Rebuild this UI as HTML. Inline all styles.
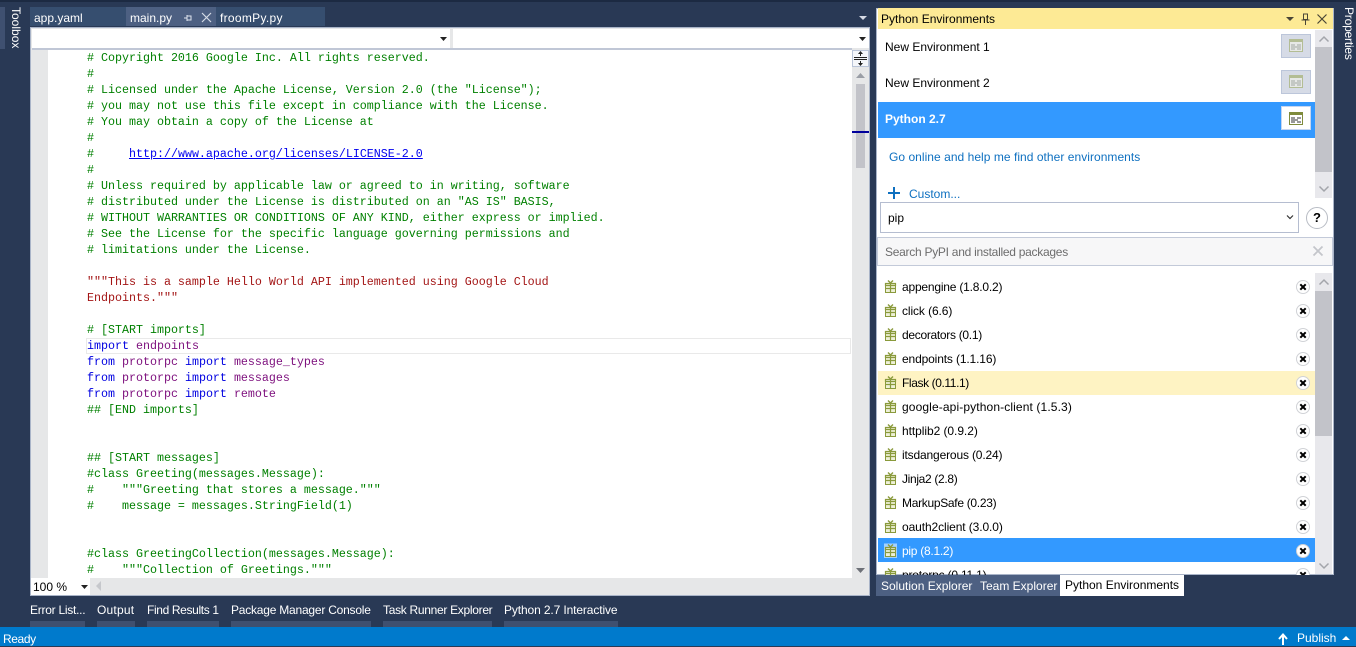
<!DOCTYPE html>
<html><head><meta charset="utf-8"><style>
html,body{margin:0;padding:0}
body{width:1356px;height:646px;overflow:hidden;background:#293955;position:relative;font-family:"Liberation Sans",sans-serif;font-size:12px;color:#000}
.a{position:absolute;white-space:nowrap}
.t{position:absolute;white-space:nowrap;line-height:16px}
pre{margin:0;position:absolute;left:0;top:0;font:11.67px/16px "Liberation Mono",monospace;color:#008000}
.k{color:#0000e0}.p{color:#7d0f7d}.s{color:#a31515}
.u{color:#0000ee;text-decoration:underline}
svg{position:absolute;overflow:visible}
</style></head><body>
<div class="a" style="left:0;top:0;width:1356px;height:2px;background:#1c2a42"></div>
<!-- side tabs -->
<div class="a" style="left:0;top:7px;width:5px;height:42px;background:#3f5070"></div>
<div class="a" style="left:8px;top:7px;writing-mode:vertical-rl;color:#fff;line-height:15px">Toolbox</div>
<div class="a" style="left:1341px;top:7px;writing-mode:vertical-rl;color:#fff;line-height:15px;letter-spacing:-.2px">Properties</div>
<!-- doc tabs -->
<div class="a" style="left:30px;top:7px;width:96px;height:19px;background:#364e6f"></div>
<div class="a" style="left:126px;top:7px;width:90px;height:19px;background:#4d6082"></div>
<div class="a" style="left:216px;top:7px;width:109px;height:19px;background:#364e6f"></div>
<div class="t" style="left:34px;top:10px;color:#fff">app.yaml</div>
<div class="t" style="left:130px;top:10px;color:#fff">main.py</div>
<div class="t" style="left:220px;top:10px;color:#fff;letter-spacing:.3px">froomPy.py</div>
<svg style="left:183px;top:13px" width="10" height="10"><path d="M1 5H4M4 2V8M4 3H8V7H4" fill="none" stroke="#dfe5ef"/></svg>
<svg style="left:201px;top:12px" width="11" height="11"><path d="M1 1L10 10M10 1L1 10" stroke="#d5dbe6" stroke-width="1.2"/></svg>
<svg style="left:859px;top:16px" width="8" height="4"><path d="M0 0H8L4 4Z" fill="#d5dae4"/></svg>
<!-- editor -->
<div class="a" style="left:30px;top:27px;width:840px;height:569px;background:#e6e7e8;box-shadow:inset 0 0 0 1px #a9b4c8"></div>
<div class="a" style="left:32px;top:29px;width:418px;height:19px;background:#fff"></div>
<div class="a" style="left:453px;top:29px;width:416px;height:19px;background:#fff"></div>
<svg style="left:440px;top:37px" width="7" height="4"><path d="M0 0H7L3.5 4Z" fill="#222"/></svg>
<svg style="left:859px;top:37px" width="7" height="4"><path d="M0 0H7L3.5 4Z" fill="#222"/></svg>
<div class="a" style="left:32px;top:48px;width:820px;height:2px;background:#c0c7d6"></div>
<div class="a" style="left:48px;top:50px;width:804px;height:528px;background:#fff;overflow:hidden">
<div class="a" style="left:38px;top:288px;width:765px;height:16px;box-sizing:border-box;border:1px solid #e9e9e9"></div>
<div style="position:absolute;left:39px;top:0;width:760px;height:528px"><pre># Copyright 2016 Google Inc. All rights reserved.
#
# Licensed under the Apache License, Version 2.0 (the "License");
# you may not use this file except in compliance with the License.
# You may obtain a copy of the License at
#
#     <span class="u">http://www.apache.org/licenses/LICENSE-2.0</span>
#
# Unless required by applicable law or agreed to in writing, software
# distributed under the License is distributed on an "AS IS" BASIS,
# WITHOUT WARRANTIES OR CONDITIONS OF ANY KIND, either express or implied.
# See the License for the specific language governing permissions and
# limitations under the License.

<span class="s">"""This is a sample Hello World API implemented using Google Cloud
Endpoints."""</span>

# [START imports]
<span class="k">import</span> <span class="p">endpoints</span>
<span class="k">from</span> <span class="p">protorpc</span> <span class="k">import</span> <span class="p">message_types</span>
<span class="k">from</span> <span class="p">protorpc</span> <span class="k">import</span> <span class="p">messages</span>
<span class="k">from</span> <span class="p">protorpc</span> <span class="k">import</span> <span class="p">remote</span>
## [END imports]


## [START messages]
#class Greeting(messages.Message):
#    """Greeting that stores a message."""
#    message = messages.StringField(1)


#class GreetingCollection(messages.Message):
#    """Collection of Greetings."""</pre></div>
</div>
<!-- editor scrollbar -->
<div class="a" style="left:852px;top:50px;width:17px;height:17px;background:#f4f6fa;box-sizing:border-box;border:1px solid #b9c4d8"></div>
<svg style="left:854px;top:51px" width="13" height="15"><path d="M0 6.5H13M0 8.5H13M6.5 1V5M6.5 10V14" stroke="#222" fill="none"/><path d="M4 3L6.5 0L9 3ZM4 12L6.5 15L9 12Z" fill="#222"/></svg>
<svg style="left:856px;top:73px" width="10" height="5"><path d="M0 5H9L4.5 0Z" fill="#9a9ea6"/></svg>
<div class="a" style="left:856px;top:84px;width:9px;height:84px;background:#c2c3c9"></div>
<div class="a" style="left:852px;top:131px;width:17px;height:2px;background:#00009c"></div>
<svg style="left:856px;top:568px" width="10" height="5"><path d="M0 0H9L4.5 5Z" fill="#6e7178"/></svg>
<!-- zoom bar -->
<div class="a" style="left:31px;top:578px;width:59px;height:17px;background:#fff"></div>
<div class="t" style="left:33px;top:579px">100 %</div>
<svg style="left:81px;top:585px" width="7" height="4"><path d="M0 0H7L3.5 4Z" fill="#222"/></svg>
<svg style="left:96px;top:581px" width="6" height="11"><path d="M5 0V10L0 5Z" fill="#c6c8cc"/></svg>
<!-- bottom tool tabs -->
<div class="a" style="left:30px;top:621px;width:55px;height:6px;background:#3f5070"></div>
<div class="a" style="left:97px;top:621px;width:38px;height:6px;background:#3f5070"></div>
<div class="a" style="left:147px;top:621px;width:72px;height:6px;background:#3f5070"></div>
<div class="a" style="left:231px;top:621px;width:140px;height:6px;background:#3f5070"></div>
<div class="a" style="left:383px;top:621px;width:109px;height:6px;background:#3f5070"></div>
<div class="a" style="left:504px;top:621px;width:114px;height:6px;background:#3f5070"></div>
<div class="t" style="left:30px;top:602px;color:#fff;letter-spacing:-.26px">Error List...</div>
<div class="t" style="left:97px;top:602px;color:#fff;letter-spacing:.2px">Output</div>
<div class="t" style="left:147px;top:602px;color:#fff;letter-spacing:-.36px">Find Results 1</div>
<div class="t" style="left:231px;top:602px;color:#fff;letter-spacing:-.22px">Package Manager Console</div>
<div class="t" style="left:383px;top:602px;color:#fff;letter-spacing:-.3px">Task Runner Explorer</div>
<div class="t" style="left:504px;top:602px;color:#fff;letter-spacing:-.12px">Python 2.7 Interactive</div>
<!-- status -->
<div class="a" style="left:0;top:627px;width:1356px;height:19px;background:#007acc"></div>
<div class="t" style="left:3px;top:631px;color:#fff;letter-spacing:-.4px">Ready</div>
<svg style="left:1278px;top:633px" width="10" height="12"><path d="M5 12V3M1 6L5 1.5L9 6" stroke="#fff" stroke-width="2" fill="none"/></svg>
<div class="t" style="left:1297px;top:630px;color:#fff">Publish</div>
<svg style="left:1342px;top:636px" width="8" height="4"><path d="M0 4H8L4 0Z" fill="#fff"/></svg>
<!-- right panel -->
<div class="a" style="left:876px;top:8px;width:458px;height:567px;background:#fff;box-shadow:inset 0 0 0 1px #a9b4c8"></div>
<div class="a" style="left:878px;top:8px;width:455px;height:21px;background:#fdea95"></div>
<div class="t" style="left:881px;top:11px">Python Environments</div>
<svg style="left:1286px;top:17px" width="8" height="4"><path d="M0 0H8L4 4Z" fill="#4a4636"/></svg>
<svg style="left:1301px;top:13px" width="9" height="12"><path d="M2.5 1H6.5V6.5H2.5ZM0.5 7H8.5M4.5 7V12" fill="none" stroke="#4a4636" stroke-width="1"/></svg>
<svg style="left:1317px;top:14px" width="10" height="10"><path d="M0.5 0.5L9.5 9.5M9.5 0.5L0.5 9.5" stroke="#4a4636" stroke-width="1.2"/></svg>
<!-- env list -->
<div class="t" style="left:885px;top:39px">New Environment 1</div>
<div class="t" style="left:885px;top:75px">New Environment 2</div>
<div class="a" style="left:878px;top:102px;width:437px;height:36px;background:#3399ff"></div>
<div class="t" style="left:885px;top:111px;color:#fff;font-weight:bold">Python 2.7</div>
<div class="a" style="left:1281px;top:34px;width:30px;height:24px;box-sizing:border-box;background:#d6dbe6;border:1px solid #bcc6da"></div>
<div class="a" style="left:1281px;top:70px;width:30px;height:24px;box-sizing:border-box;background:#d6dbe6;border:1px solid #bcc6da"></div>
<div class="a" style="left:1281px;top:106px;width:30px;height:24px;box-sizing:border-box;background:#fff;border:1px solid #c5d5f0"></div>
<svg style="left:1289px;top:39px" width="14" height="13"><rect x=".5" y=".5" width="13" height="12" fill="#e6e8e6" stroke="#b3bd94"/><rect width="14" height="3" fill="#b3bd94"/><path d="M2 6H6M8 6H12M2 8H12M2 10H6M8 10H12" stroke="#a3a9a3"/></svg>
<svg style="left:1289px;top:75px" width="14" height="13"><rect x=".5" y=".5" width="13" height="12" fill="#e6e8e6" stroke="#b3bd94"/><rect width="14" height="3" fill="#b3bd94"/><path d="M2 6H6M8 6H12M2 8H12M2 10H6M8 10H12" stroke="#a3a9a3"/></svg>
<svg style="left:1289px;top:112px" width="14" height="13"><rect x=".5" y=".5" width="13" height="12" fill="#fff" stroke="#7f8b3c"/><rect width="14" height="3" fill="#7f8b3c"/><path d="M2 6H6M8 6H12M2 8H9M2 10H6M8 10H12" stroke="#333"/></svg>
<div class="t" style="left:889px;top:149px;color:#0e70c0;letter-spacing:.04px">Go online and help me find other environments</div>
<svg style="left:888px;top:187px" width="12" height="12"><path d="M6 0V12M0 6H12" stroke="#0e70c0" stroke-width="2"/></svg>
<div class="t" style="left:909px;top:186px;color:#0e70c0">Custom...</div>
<div class="a" style="left:1315px;top:30px;width:17px;height:168px;background:#e8e8ec"></div>
<div class="a" style="left:1315px;top:47px;width:17px;height:125px;background:#c2c3c9"></div>
<svg style="left:1319px;top:36px" width="10" height="6"><path d="M0.5 5.5L5 1L9.5 5.5" fill="none" stroke="#a3a5ab" stroke-width="1.5"/></svg>
<svg style="left:1319px;top:186px" width="10" height="6"><path d="M0.5 0.5L5 5L9.5 0.5" fill="none" stroke="#a3a5ab" stroke-width="1.5"/></svg>
<!-- combo -->
<div class="a" style="left:880px;top:202px;width:419px;height:31px;box-sizing:border-box;background:#fff;border:1px solid #b5bdd0"></div>
<div class="t" style="left:888px;top:210px">pip</div>
<svg style="left:1286px;top:215px" width="8" height="5"><path d="M1 0.5L4 3.5L7 0.5" fill="none" stroke="#333" stroke-width="1.2"/></svg>
<div class="a" style="left:1306px;top:207px;width:22px;height:22px;box-sizing:border-box;border:1px solid #b8bcc4;border-radius:50%;background:#fff;text-align:center;font-weight:bold;line-height:20px;font-size:13px">?</div>
<!-- search -->
<div class="a" style="left:877px;top:237px;width:456px;height:29px;box-sizing:border-box;background:#f7f7f8;border:1px solid #c3cad9"></div>
<div class="t" style="left:885px;top:244px;color:#6d6d6d;letter-spacing:-.27px">Search PyPI and installed packages</div>
<svg style="left:1313px;top:246px" width="10" height="10"><path d="M0.5 0.5L9.5 9.5M9.5 0.5L0.5 9.5" stroke="#c4c6cb" stroke-width="1.8"/></svg>
<!-- packages -->
<div class="a" style="left:878px;top:371px;width:437px;height:24px;background:#fef3c3"></div>
<div class="a" style="left:878px;top:538px;width:437px;height:24px;background:#3399ff"></div>
<div class="a" style="left:878px;top:267px;width:437px;height:308px;overflow:hidden">
<div class="t" style="left:24px;top:12px;letter-spacing:-.2px">appengine (1.8.0.2)</div>
<div class="t" style="left:24px;top:36px;letter-spacing:-.1px">click (6.6)</div>
<div class="t" style="left:24px;top:60px;letter-spacing:-.3px">decorators (0.1)</div>
<div class="t" style="left:24px;top:84px;letter-spacing:-.14px">endpoints (1.1.16)</div>
<div class="t" style="left:24px;top:108px;letter-spacing:-.4px">Flask (0.11.1)</div>
<div class="t" style="left:24px;top:132px;letter-spacing:.12px">google-api-python-client (1.5.3)</div>
<div class="t" style="left:24px;top:156px;letter-spacing:-.06px">httplib2 (0.9.2)</div>
<div class="t" style="left:24px;top:180px;letter-spacing:-.16px">itsdangerous (0.24)</div>
<div class="t" style="left:24px;top:204px;letter-spacing:-.33px">Jinja2 (2.8)</div>
<div class="t" style="left:24px;top:228px;letter-spacing:-.3px">MarkupSafe (0.23)</div>
<div class="t" style="left:24px;top:252px;letter-spacing:-.1px">oauth2client (3.0.0)</div>
<div class="t" style="left:24px;top:276px;color:#fff;letter-spacing:-.27px">pip (8.1.2)</div>
<div class="t" style="left:24px;top:300px;letter-spacing:-.2px">protorpc (0.11.1)</div>
<svg style="left:0;top:0" width="437" height="308">
<defs>
<g id="g"><path d="M3 0.5L5.5 3L8 0.5" fill="none" stroke="#8a9a3c" stroke-width="1.4"/><rect x="0.5" y="3.5" width="10" height="9" fill="#eef0d8" stroke="#8a9a3c"/><path d="M0.5 3.5H10.5V5.5H0.5ZM5.5 3.5V12.5M0.5 8.5H10.5" fill="none" stroke="#8a9a3c" stroke-width="1.2"/></g>
<g id="h"><rect x="-1" y="-0.5" width="13" height="14.5" fill="#fff" fill-opacity=".55"/><use href="#g"/></g>
<g id="x"><circle cx="7" cy="7" r="6.5" fill="#fff" stroke="#d0d2d6"/><path d="M4.3 4.3L9.7 9.7M9.7 4.3L4.3 9.7" stroke="#000" stroke-width="2"/></g>
</defs>
<use href="#g" x="7" y="13"/><use href="#g" x="7" y="37"/><use href="#g" x="7" y="61"/><use href="#g" x="7" y="85"/><use href="#g" x="7" y="109"/><use href="#g" x="7" y="133"/><use href="#g" x="7" y="157"/><use href="#g" x="7" y="181"/><use href="#g" x="7" y="205"/><use href="#g" x="7" y="229"/><use href="#g" x="7" y="253"/><use href="#h" x="7" y="277"/><use href="#g" x="7" y="301"/>
<use href="#x" x="418" y="13"/><use href="#x" x="418" y="37"/><use href="#x" x="418" y="61"/><use href="#x" x="418" y="85"/><use href="#x" x="418" y="109"/><use href="#x" x="418" y="133"/><use href="#x" x="418" y="157"/><use href="#x" x="418" y="181"/><use href="#x" x="418" y="205"/><use href="#x" x="418" y="229"/><use href="#x" x="418" y="253"/><use href="#x" x="418" y="277"/><use href="#x" x="418" y="301"/>
</svg>
</div>
<div class="a" style="left:1315px;top:273px;width:17px;height:301px;background:#e8e8ec"></div>
<div class="a" style="left:1315px;top:291px;width:17px;height:145px;background:#c2c3c9"></div>
<svg style="left:1319px;top:279px" width="10" height="6"><path d="M0.5 5.5L5 1L9.5 5.5" fill="none" stroke="#a3a5ab" stroke-width="1.5"/></svg>
<svg style="left:1319px;top:563px" width="10" height="6"><path d="M0.5 0.5L5 5L9.5 0.5" fill="none" stroke="#a3a5ab" stroke-width="1.5"/></svg>
<!-- panel tabs -->
<div class="a" style="left:876px;top:575px;width:184px;height:21px;background:#4d6082"></div>
<div class="a" style="left:1060px;top:575px;width:124px;height:21px;background:#fff"></div>
<div class="t" style="left:881px;top:578px;color:#fff">Solution Explorer</div>
<div class="t" style="left:980px;top:578px;color:#fff">Team Explorer</div>
<div class="t" style="left:1065px;top:577px">Python Environments</div>
</body></html>
